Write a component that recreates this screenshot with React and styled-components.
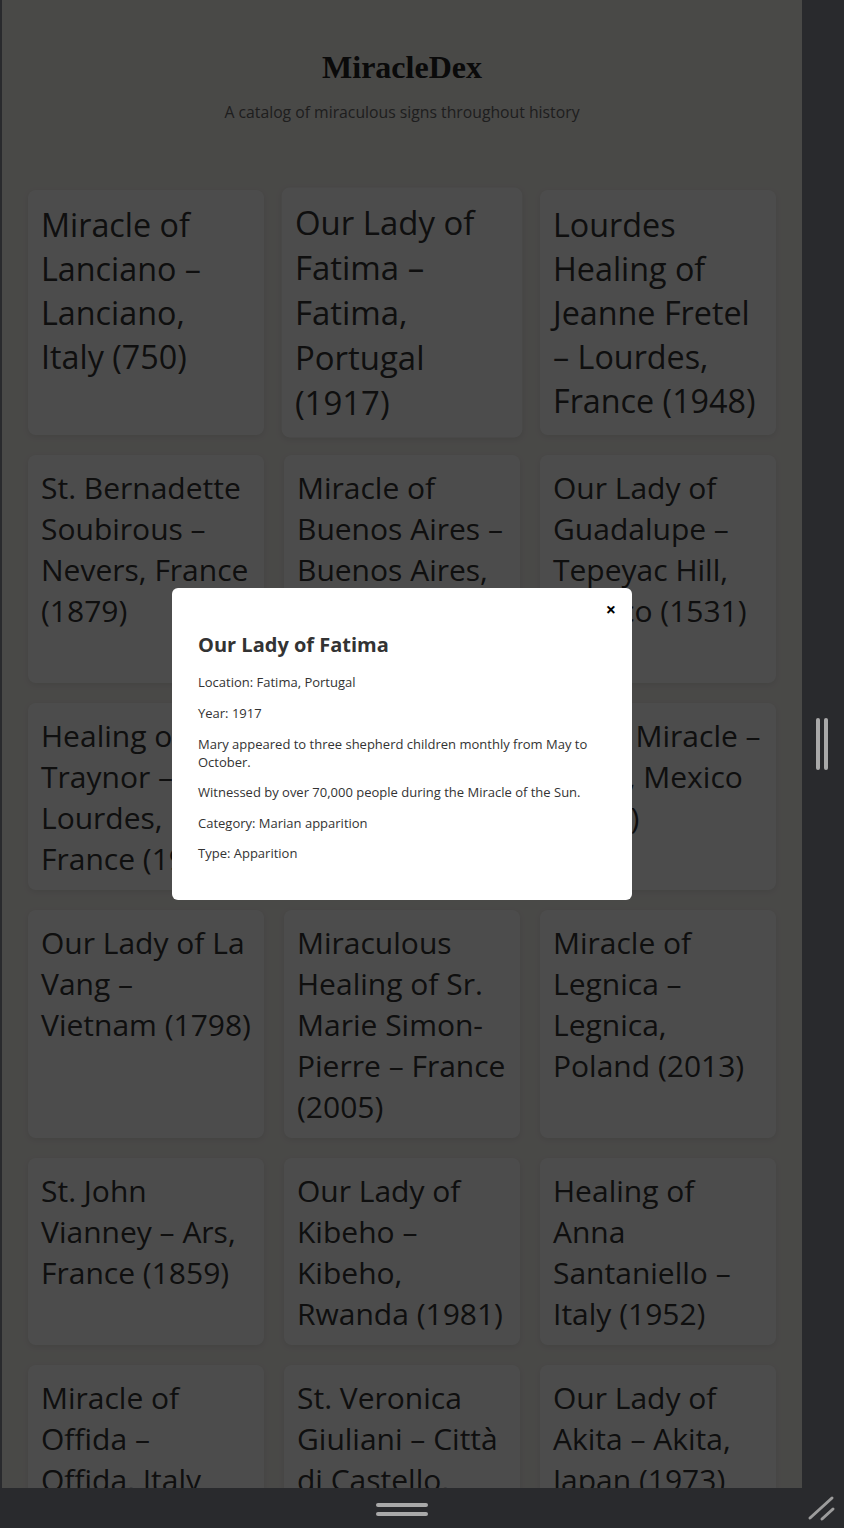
import React from 'react';
import styled, { createGlobalStyle } from 'styled-components';

const GlobalStyle = createGlobalStyle`
  html, body {
    margin: 0;
    padding: 0;
    background: #292a2d;
  }
  * {
    box-sizing: border-box;
  }
`;

const miracles = [
  'Miracle of Lanciano – Lanciano, Italy (750)',
  'Our Lady of Fatima – Fatima, Portugal (1917)',
  'Lourdes Healing of Jeanne Fretel – Lourdes, France (1948)',
  'St. Bernadette Soubirous – Nevers, France (1879)',
  'Miracle of Buenos Aires – Buenos Aires, Argentina (1992)',
  'Our Lady of Guadalupe – Tepeyac Hill, Mexico (1531)',
  'Healing of Jack Traynor – Lourdes, France (1923)',
  'Eucharistic Miracle of Siena (1730)',
  'Tixtla Miracle – Tixtla, Mexico (2006)',
  'Our Lady of La Vang – Vietnam (1798)',
  'Miraculous Healing of Sr. Marie Simon-Pierre – France (2005)',
  'Miracle of Legnica – Legnica, Poland (2013)',
  'St. John Vianney – Ars, France (1859)',
  'Our Lady of Kibeho – Kibeho, Rwanda (1981)',
  'Healing of Anna Santaniello – Italy (1952)',
  'Miracle of Offida – Offida, Italy (1273)',
  'St. Veronica Giuliani – Città di Castello, Italy (1727)',
  'Our Lady of Akita – Akita, Japan (1973)',
];

const selected = {
  title: 'Our Lady of Fatima',
  details: [
    'Location: Fatima, Portugal',
    'Year: 1917',
    'Mary appeared to three shepherd children monthly from May to October.',
    'Witnessed by over 70,000 people during the Miracle of the Sun.',
    'Category: Marian apparition',
    'Type: Apparition',
  ],
};

const Frame = styled.div`
  display: grid;
  grid-template-columns: 2px 800px 42px;
  grid-template-rows: 1488px 40px;
  width: 844px;
  height: 1528px;
  background: #292a2d;
  overflow: hidden;
`;

const Viewport = styled.div`
  grid-column: 2;
  grid-row: 1;
  position: relative;
  overflow: hidden;
  background: #f5f3ef;
`;

const SideBar = styled.div`
  grid-column: 3;
  grid-row: 1;
  display: flex;
  align-items: center;
  justify-content: center;
  gap: 4px;
  padding-right: 2px;
`;

const BottomHandle = styled.div`
  grid-column: 2;
  grid-row: 2;
  display: flex;
  flex-direction: column;
  align-items: center;
  justify-content: center;
  gap: 5px;
  padding-top: 3px;
`;

const Corner = styled.div`
  grid-column: 3;
  grid-row: 2;
  display: flex;
  align-items: flex-start;
  justify-content: flex-start;
  padding: 4px 0 0 4px;
`;

const Grip = styled.span`
  display: block;
  background: #a9a9a9;
  border-radius: 2px;
  width: ${({ vertical }) => (vertical ? '4px' : '52px')};
  height: ${({ vertical }) => (vertical ? '52px' : '4px')};
`;

const Page = styled.main`
  font-family: 'Open Sans', 'Noto Sans', sans-serif;
  color: #333;
`;

const Header = styled.header`
  text-align: center;
  padding-top: 49px;
`;

const Title = styled.h1`
  margin: 0;
  font-family: 'Liberation Serif', 'Times New Roman', serif;
  font-size: 32px;
  font-weight: 700;
  line-height: 1.15;
  color: #222;
`;

const Subtitle = styled.p`
  margin: 15px 0 0;
  font-size: 15.75px;
  line-height: normal;
  color: #666;
`;

const Grid = styled.section`
  display: grid;
  grid-template-columns: repeat(3, 1fr);
  gap: 20px;
  padding: 0 26px;
  margin-top: 67px;
`;

const Card = styled.article`
  background: #fff;
  border-radius: 8px;
  padding: 12px 13px ${({ lead }) => (lead ? '13px' : '11px')};
  box-shadow: 0 2px 6px rgba(0, 0, 0, 0.08);
  transform: ${({ active }) => (active ? 'scale(1.02)' : 'none')};
`;

const CardTitle = styled.h3`
  margin: 0;
  font-size: ${({ lead }) => (lead ? '32.3px' : '30px')};
  font-weight: 400;
  line-height: normal;
  color: #333;
`;

const Backdrop = styled.div`
  position: absolute;
  inset: 0;
  background: rgba(0, 0, 0, 0.7);
  display: flex;
  align-items: center;
  justify-content: center;
`;

const Modal = styled.div`
  position: relative;
  width: 460px;
  padding: 26.5px 26px 25.5px;
  background: #fff;
  border-radius: 6px;
  font-family: 'Open Sans', 'Noto Sans', sans-serif;
  color: #333;
`;

const CloseButton = styled.button`
  position: absolute;
  top: 9px;
  right: 16px;
  padding: 0;
  border: none;
  background: none;
  font-family: 'Open Sans', sans-serif;
  font-size: 18px;
  font-weight: 700;
  line-height: normal;
  color: #000;
  cursor: pointer;
`;

const ModalTitle = styled.h2`
  margin: 16.6px 0 15.6px;
  font-size: 20px;
  font-weight: 700;
  line-height: normal;
`;

const Detail = styled.p`
  margin: 12.6px 0;
  font-size: 13px;
  line-height: normal;
`;

const ResizeIcon = () => (
  <svg width="32" height="32" viewBox="0 0 32 32">
    <line x1="4" y1="26" x2="26" y2="6" stroke="#9c9c9c" strokeWidth="3" strokeLinecap="round" />
    <line x1="16" y1="27" x2="27" y2="17" stroke="#9c9c9c" strokeWidth="3" strokeLinecap="round" />
  </svg>
);

const App = () => {
  return (
    <>
      <GlobalStyle />
      <Frame>
        <Viewport>
          <Page>
            <Header>
              <Title>MiracleDex</Title>
              <Subtitle>A catalog of miraculous signs throughout history</Subtitle>
            </Header>
            <Grid>
              {miracles.map((name, i) => (
                <Card key={name} active={i === 1} lead={i < 3}>
                  <CardTitle lead={i < 3}>{name}</CardTitle>
                </Card>
              ))}
            </Grid>
          </Page>
          <Backdrop>
            <Modal>
              <CloseButton>×</CloseButton>
              <ModalTitle>{selected.title}</ModalTitle>
              {selected.details.map((line) => (
                <Detail key={line}>{line}</Detail>
              ))}
            </Modal>
          </Backdrop>
        </Viewport>
        <SideBar>
          <Grip vertical />
          <Grip vertical />
        </SideBar>
        <BottomHandle>
          <Grip />
          <Grip />
        </BottomHandle>
        <Corner>
          <ResizeIcon />
        </Corner>
      </Frame>
    </>
  );
};

export default App;
